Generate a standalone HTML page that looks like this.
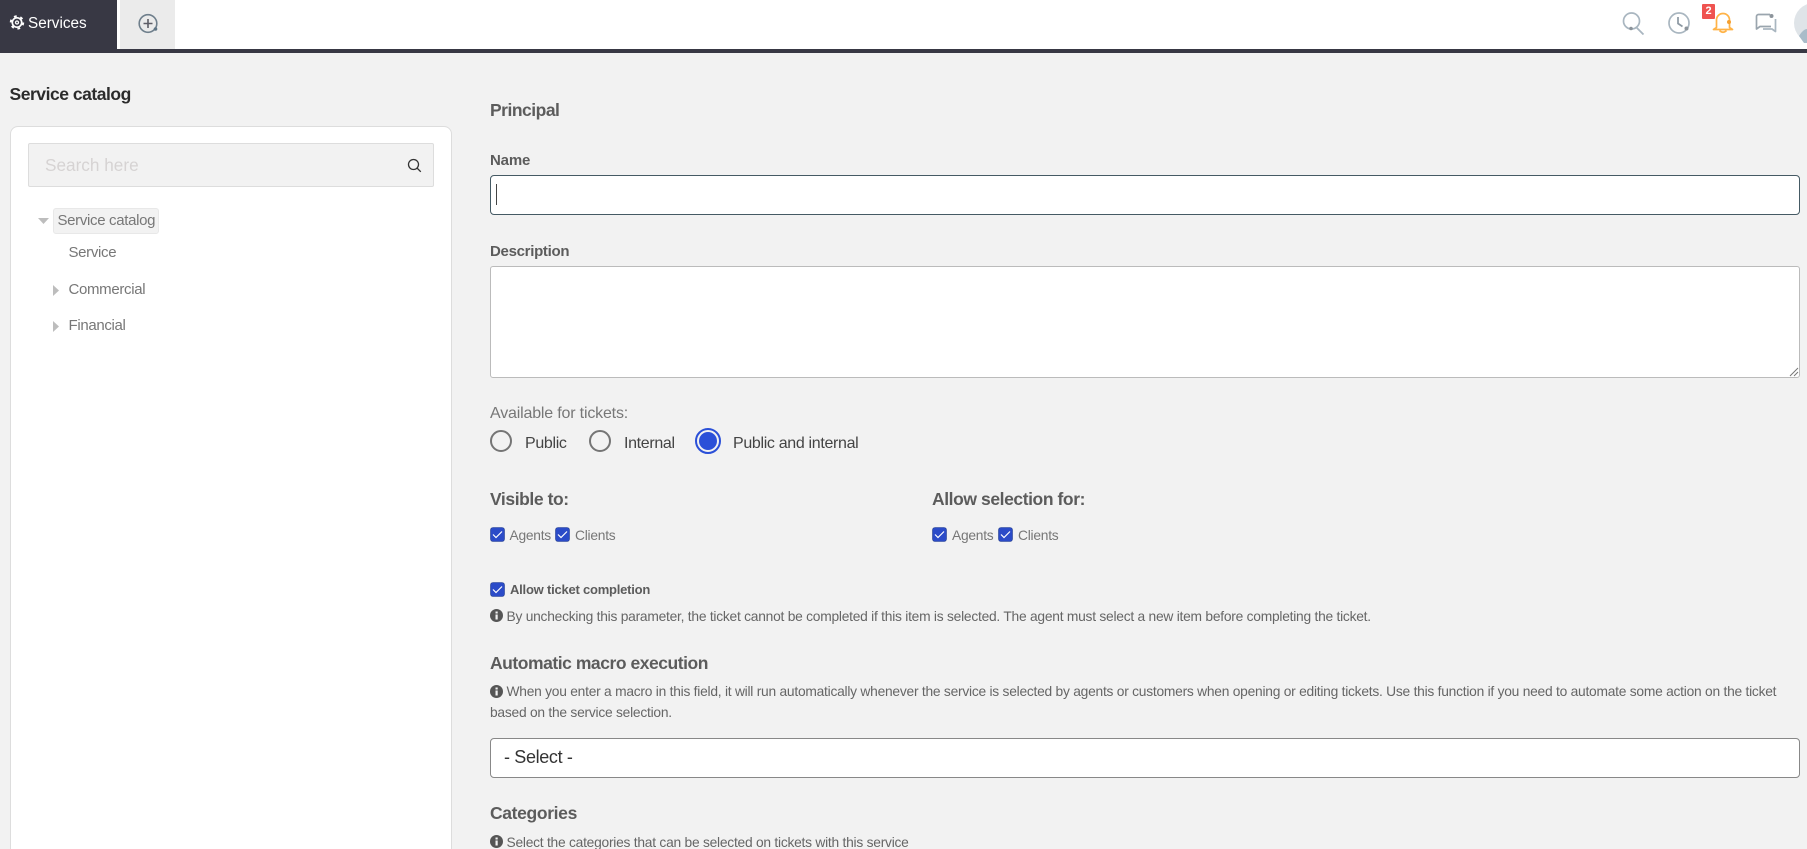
<!DOCTYPE html>
<html lang="en">
<head>
<meta charset="utf-8">
<title>Service catalog</title>
<style>
html,body{margin:0;padding:0;width:1807px;height:849px;overflow:hidden;background:#f2f2f2;font-family:"Liberation Sans",Arial,sans-serif}
#root{position:relative;width:1807px;height:849px;overflow:hidden;background:#f2f2f2}
.a{position:absolute}
.t{position:absolute;white-space:nowrap;line-height:20px;height:20px}
.b{font-weight:700;color:#5c5c5c}
.h{font-size:17.5px;letter-spacing:-.42px}
.box{position:absolute;box-sizing:border-box;background:#fff}
.cb{position:absolute;width:15px;height:15px;display:block}
.radio{position:absolute;box-sizing:border-box;width:22px;height:22px;border:2px solid #757575;border-radius:50%}
.note{font-size:13.8px;letter-spacing:-.245px;color:#666}
.sm{font-size:13.8px;letter-spacing:-.25px;color:#777}
.tree{font-size:15px;letter-spacing:-.33px;color:#777}
.r{font-size:16px;letter-spacing:-.33px;color:#444}
</style>
</head>
<body>
<div id="root">
<!-- top bar -->
<div class="a" style="left:0;top:0;width:1807px;height:49px;background:#fff"></div>
<div class="a" style="left:0;top:49px;width:1807px;height:4px;background:#383844"></div>
<div class="a" style="left:0;top:0;width:117px;height:53px;background:#383844"></div>
<div class="a" style="left:120px;top:0;width:55px;height:49px;background:#ebebeb"></div>
<svg class="a" style="left:9px;top:14px" width="16" height="17" viewBox="0 0 16 17" fill="none"><circle cx="8" cy="8.500" r="4.700" stroke="#fff" stroke-width="1.700"/><circle cx="8" cy="8.500" r="6.300" stroke="#fff" stroke-width="1.800" stroke-dasharray="2.800 3.800"/><circle cx="8" cy="8.500" r="1.500" stroke="#fff" stroke-width="1.300"/></svg>
<div class="t" style="left:28px;top:13.500px;font-size:15.300px;color:#fff">Services</div>
<svg class="a" style="left:136px;top:12px" width="24" height="24" viewBox="0 0 24 24" fill="none"><circle cx="12" cy="11.500" r="8.800" stroke="#6f7f8c" stroke-width="1.600"/><path d="M12 7v9M7.500 11.500h9" stroke="#5d5d66" stroke-width="1.600"/><circle cx="19.500" cy="17" r="1.800" fill="#5f7585"/></svg>

<!-- right icons -->
<svg class="a" style="left:1622px;top:11px" width="24" height="24" viewBox="0 0 24 24" fill="none"><circle cx="9.500" cy="10" r="8" stroke="#a9b6c0" stroke-width="1.700"/><path d="M14.500 16.500l7 7" stroke="#a9b6c0" stroke-width="1.800"/><circle cx="9" cy="17.500" r="1.800" fill="#8c949b"/></svg>
<svg class="a" style="left:1667px;top:11px" width="24" height="24" viewBox="0 0 24 24" fill="none"><circle cx="12" cy="12" r="10" stroke="#a9b6c0" stroke-width="1.700"/><path d="M11 6v6.500l4.500 3" stroke="#8c98a2" stroke-width="1.700"/><circle cx="19.500" cy="17.500" r="2" fill="#8c949b"/></svg>
<svg class="a" style="left:1712px;top:11px" width="22" height="23" viewBox="0 0 22 23" fill="none"><path d="M4.500 16.500V9a6.500 6.500 0 0 1 13 0v7.500l3 2H1.500z" stroke="#ffb347" stroke-width="1.700" stroke-linejoin="round"/><path d="M7.500 19.500q3.500 3.500 7 0" stroke="#ffb347" stroke-width="1.700"/><circle cx="17" cy="11" r="2" fill="#f5a030"/></svg>
<div class="a" style="left:1702px;top:4px;width:13px;height:15px;background:#ef5350;border-radius:1px;color:#fff;font-size:11px;font-weight:700;line-height:15px;text-align:center">2</div>
<svg class="a" style="left:1755px;top:12px" width="24" height="22" viewBox="0 0 24 22" fill="none"><path d="M15 2.500H3.500a2 2 0 0 0-2 2V17L5 14.500h11" stroke="#9aa5ae" stroke-width="1.700" stroke-linejoin="round"/><path d="M20.500 7v12.500L17 17H8" stroke="#a9b6c0" stroke-width="1.700" stroke-linejoin="round"/><circle cx="16.500" cy="4" r="2" fill="#8c949b"/></svg>
<svg class="a" style="left:1794px;top:3px" width="13" height="40" viewBox="0 0 13 40"><circle cx="20" cy="20" r="20" fill="#dfe4e8"/><path d="M5 33c3-5 6-7 8-7v14H10z" fill="#a9bcc9"/></svg>

<!-- left card -->
<div class="t" style="left:9.500px;top:84px;font-size:17.500px;letter-spacing:-.47px;font-weight:700;color:#2b2b2b">Service catalog</div>
<div class="box" style="left:10px;top:126px;width:442px;height:760px;border:1px solid #ddd;border-radius:8px"></div>
<div class="box" style="left:28px;top:143px;width:406px;height:44px;background:#f2f2f2;border:1px solid #ddd;border-radius:2px"></div>
<div class="t" style="left:45px;top:154.500px;font-size:17.200px;color:#d6d3d3">Search here</div>
<svg class="a" style="left:407px;top:158px" width="15" height="15" viewBox="0 0 15 15" fill="none"><circle cx="6.500" cy="6.500" r="5" stroke="#333" stroke-width="1.300"/><path d="M10 10l3.800 3.800" stroke="#333" stroke-width="1.300"/></svg>

<svg class="a" style="left:38px;top:218px" width="11" height="7"><path d="M0 0h11L5.500 6z" fill="#bdbdbd"/></svg>
<div class="box" style="left:53px;top:208px;width:106px;height:26px;background:#f2f2f2;border:1px solid #e8e8e8;border-radius:3px"></div>
<div class="t tree" style="left:57.500px;top:210.500px">Service catalog</div>
<div class="t tree" style="left:68.500px;top:243px">Service</div>
<svg class="a" style="left:53px;top:285px" width="6" height="11"><path d="M0 0l6 5.500L0 11z" fill="#bdbdbd"/></svg>
<div class="t tree" style="left:68.500px;top:280px">Commercial</div>
<svg class="a" style="left:53px;top:321px" width="6" height="11"><path d="M0 0l6 5.500L0 11z" fill="#bdbdbd"/></svg>
<div class="t tree" style="left:68.500px;top:316px">Financial</div>

<!-- main form -->
<div class="t b h" style="left:490px;top:99.500px;letter-spacing:-.5px">Principal</div>
<div class="t b" style="left:490px;top:150.500px;font-size:15px;letter-spacing:-.15px">Name</div>
<div class="box" style="left:490px;top:175px;width:1310px;height:40px;border:1px solid #455a64;border-radius:4px"></div>
<div class="a" style="left:496px;top:184px;width:1px;height:21px;background:#444"></div>
<div class="t b" style="left:490px;top:241.500px;font-size:15px;letter-spacing:-.3px">Description</div>
<div class="box" style="left:490px;top:266px;width:1310px;height:112px;border:1px solid #bbb;border-radius:3px"></div>
<svg class="a" style="left:1789px;top:367px" width="10" height="10"><path d="M1 9l8-8M5 9l4-4" stroke="#777" stroke-width="1"/></svg>

<div class="t" style="left:490px;top:404px;font-size:16px;letter-spacing:-.18px;color:#777">Available for tickets:</div>
<div class="radio" style="left:490px;top:430px"></div>
<div class="t r" style="left:525px;top:434px">Public</div>
<div class="radio" style="left:589px;top:430px"></div>
<div class="t r" style="left:624px;top:434px">Internal</div>
<div class="a" style="left:695px;top:428px;width:26px;height:26px;box-sizing:border-box;border:2px solid #2b50d8;border-radius:50%;background:#f2f2f2"><div class="a" style="left:2px;top:2px;width:18px;height:18px;border-radius:50%;background:#2b50d8"></div></div>
<div class="t r" style="left:733px;top:434px">Public and internal</div>

<div class="t b h" style="left:490px;top:489px">Visible to:</div>
<div class="t b h" style="left:932px;top:489px">Allow selection for:</div>

<svg width="0" height="0" style="position:absolute"><defs><g id="ck"><rect x=".5" y=".5" width="14" height="14" rx="2.500" fill="#2b4bc8" stroke="#27418f" stroke-width=".6"/><path d="M3 7.500l3 3 6-6" fill="none" stroke="#fff" stroke-width="1.200"/></g></defs></svg>
<svg class="cb" style="left:490px;top:527px"><use href="#ck"/></svg>
<div class="t sm" style="left:509.500px;top:526px">Agents</div>
<svg class="cb" style="left:555px;top:527px"><use href="#ck"/></svg>
<div class="t sm" style="left:575px;top:526px">Clients</div>
<svg class="cb" style="left:932px;top:527px"><use href="#ck"/></svg>
<div class="t sm" style="left:952px;top:526px">Agents</div>
<svg class="cb" style="left:998px;top:527px"><use href="#ck"/></svg>
<div class="t sm" style="left:1018px;top:526px">Clients</div>

<svg class="cb" style="left:490px;top:582px"><use href="#ck"/></svg>
<div class="t b" style="left:510px;top:580px;font-size:13px;letter-spacing:-.22px">Allow ticket completion</div>

<svg width="0" height="0" style="position:absolute"><defs><g id="inf"><circle cx="6.500" cy="6.500" r="6.500" fill="#555"/><rect x="5.500" y="5.500" width="2.200" height="5" fill="#f2f2f2"/><rect x="5.500" y="2.500" width="2.200" height="2" fill="#f2f2f2"/></g></defs></svg>
<svg class="a" style="left:490px;top:609px" width="13" height="13"><use href="#inf"/></svg>
<div class="t note" style="left:506.500px;top:607px">By unchecking this parameter, the ticket cannot be completed if this item is selected. The agent must select a new item before completing the ticket.</div>

<div class="t b h" style="left:490px;top:652.500px;letter-spacing:-.46px">Automatic macro execution</div>
<svg class="a" style="left:490px;top:685px" width="13" height="13"><use href="#inf"/></svg>
<div class="t note" style="left:506.500px;top:682px">When you enter a macro in this field, it will run automatically whenever the service is selected by agents or customers when opening or editing tickets. Use this function if you need to automate some action on the ticket</div>
<div class="t note" style="left:490px;top:703px">based on the service selection.</div>

<div class="box" style="left:490px;top:738px;width:1310px;height:40px;border:1px solid #888;border-radius:4px"></div>
<div class="t" style="left:504px;top:746.500px;font-size:18px;letter-spacing:-.35px;color:#333">- Select -</div>

<div class="t b h" style="left:490px;top:803px;letter-spacing:-.35px">Categories</div>
<svg class="a" style="left:490px;top:835px" width="13" height="13"><use href="#inf"/></svg>
<div class="t note" style="left:506.500px;top:833px">Select the categories that can be selected on tickets with this service</div>
</div>
</body>
</html>
